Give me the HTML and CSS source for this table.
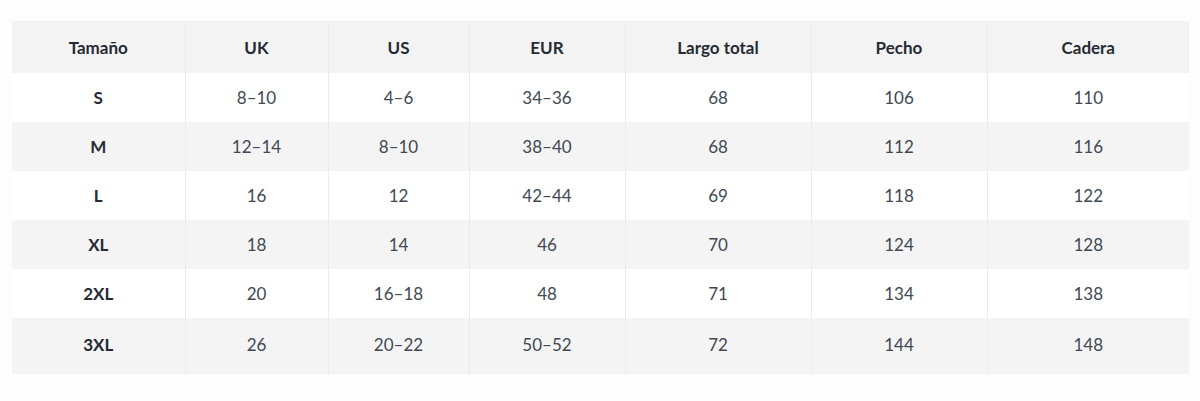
FILE: index.html
```html
<!DOCTYPE html>
<html lang="es">
<head>
<meta charset="utf-8">
<title>Tabla de tallas</title>
<link rel="stylesheet" href="styles.css">
</head>
<body>
<div class="wrap">
<table class="sizes">
  <colgroup>
    <col class="c1"><col class="c2"><col class="c3"><col class="c4"><col class="c5"><col class="c6"><col class="c7">
  </colgroup>
  <thead>
    <tr><th>Tamaño</th><th>UK</th><th>US</th><th>EUR</th><th>Largo total</th><th>Pecho</th><th>Cadera</th></tr>
  </thead>
  <tbody>
    <tr><th>S</th><td>8–10</td><td>4–6</td><td>34–36</td><td>68</td><td>106</td><td>110</td></tr>
    <tr><th>M</th><td>12–14</td><td>8–10</td><td>38–40</td><td>68</td><td>112</td><td>116</td></tr>
    <tr><th>L</th><td>16</td><td>12</td><td>42–44</td><td>69</td><td>118</td><td>122</td></tr>
    <tr><th>XL</th><td>18</td><td>14</td><td>46</td><td>70</td><td>124</td><td>128</td></tr>
    <tr><th>2XL</th><td>20</td><td>16–18</td><td>48</td><td>71</td><td>134</td><td>138</td></tr>
    <tr><th>3XL</th><td>26</td><td>20–22</td><td>50–52</td><td>72</td><td>144</td><td>148</td></tr>
  </tbody>
</table>
</div>
</body>
</html>
```
FILE: styles.css
```css
html, body {
  margin: 0;
  background: #fdfdfd;
}
body {
  font-family: Lato, "Open Sans", sans-serif;
}
.wrap {
  padding: 21px 11px 0 12px;
}
.sizes {
  width: 1177px;
  border-collapse: collapse;
  table-layout: fixed;
  font-size: 17px;
}
.c1 { width: 173px; }
.c2 { width: 143px; }
.c3 { width: 141px; }
.c4 { width: 156px; }
.c5 { width: 186px; }
.c6 { width: 176px; }
.c7 { width: 202px; }
.sizes th, .sizes td {
  padding: 0;
  text-align: center;
  vertical-align: middle;
  border-left: 1px solid #ebebeb;
}
.sizes tr > :first-child {
  border-left: none;
}
.sizes thead tr {
  height: 52px;
  background: #f3f3f3;
}
.sizes thead th {
  font-weight: 700;
  color: #262b33;
}
.sizes tbody tr {
  height: 49px;
  background: #ffffff;
}
.sizes tbody tr:nth-child(even) {
  background: #f4f4f4;
}
.sizes tbody tr:last-child {
  height: 56px;
}
.sizes tbody tr:last-child > * {
  padding-bottom: 3px;
}
.sizes tbody th {
  font-weight: 700;
  color: #262b33;
}
.sizes tbody td {
  font-weight: 400;
  color: #414852;
}
```
